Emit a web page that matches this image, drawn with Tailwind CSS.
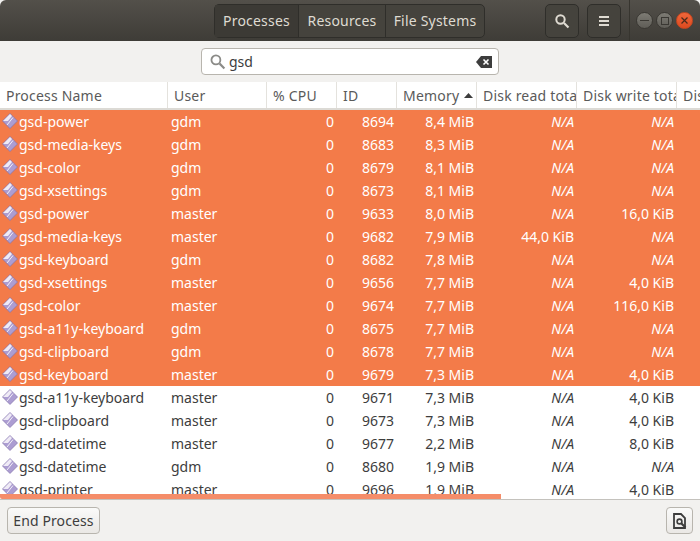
<!DOCTYPE html>
<html lang="en">
<head>
  <meta charset="UTF-8" />
  <title>System Monitor</title>
  <script src="https://cdn.jsdelivr.net/npm/@tailwindcss/browser@4"></script>
</head>
<body class="bg-[#f2f1ef] font-['Noto_Sans',sans-serif] text-[14px] text-[#3d3d3d] overflow-hidden">
  <div class="w-[700px] h-[541px] flex flex-col">
    <!-- title bar -->
    <header class="h-[41px] shrink-0 flex items-center bg-gradient-to-b from-[#53504a] to-[#3e3c37] rounded-t-[6px] text-[#dfdbd2]">
      <div class="ml-[214px] h-[34px] flex border border-[#2f2e2a] rounded-[5px] bg-[#45433d] tracking-[0.2px]">
        <div class="w-[84px] flex items-center justify-center border-r border-[#2f2e2a] bg-[#3c3a35]">Processes</div>
        <div class="w-[87px] flex items-center justify-center border-r border-[#2f2e2a]">Resources</div>
        <div class="w-[98px] flex items-center justify-center">File Systems</div>
      </div>
      <div class="ml-[60px] w-[34px] h-[34px] flex items-center justify-center border border-[#2f2e2a] rounded-[5px] bg-[#45433d]">
        <svg width="16" height="16" viewBox="0 0 16 16" fill="none" stroke="#dfdbd2"><circle cx="6.5" cy="6.5" r="4.2" stroke-width="2"/><path d="M10 10l4.5 4.5" stroke-width="2.2"/></svg>
      </div>
      <div class="ml-[8px] w-[34px] h-[34px] flex items-center justify-center border border-[#2f2e2a] rounded-[5px] bg-[#45433d]">
        <svg width="12" height="12" viewBox="0 0 12 12" fill="#dfdbd2"><rect x="1" y="1" width="10" height="2"/><rect x="1" y="5" width="10" height="2"/><rect x="1" y="9" width="10" height="2"/></svg>
      </div>
      <div class="ml-[8px] w-px h-[41px] bg-[#37352f]"></div>
      <div class="ml-[6px] flex gap-[3px]">
        <div class="w-[17px] h-[17px] rounded-full border border-[#3a3833] bg-gradient-to-b from-[#7d7b74] to-[#5f5d57] flex items-center justify-center">
          <div class="w-[9px] h-px bg-[#3a3833]"></div>
        </div>
        <div class="w-[17px] h-[17px] rounded-full border border-[#3a3833] bg-gradient-to-b from-[#7d7b74] to-[#5f5d57] flex items-center justify-center">
          <div class="w-[8px] h-[8px] border border-[#3a3833]"></div>
        </div>
        <div class="w-[17px] h-[17px] rounded-full border border-[#c9471f] bg-gradient-to-b from-[#f0663a] to-[#dc4a1f] flex items-center justify-center">
          <svg width="9" height="9" viewBox="0 0 9 9" stroke="#4a2a1a" stroke-width="1.2"><path d="M1.5 1.5l6 6M7.5 1.5l-6 6"/></svg>
        </div>
      </div>
    </header>

    <!-- search -->
    <div class="h-[41px] shrink-0 flex items-center justify-center">
      <div class="w-[298px] h-[27px] flex items-center bg-white border border-[#b8b5ae] rounded-[4px] pl-[7px] pr-[6px]">
        <svg width="17" height="17" viewBox="0 0 16 16" fill="none" stroke="#8b8b88"><circle cx="6.5" cy="6.5" r="4.2" stroke-width="1.7"/><path d="M10 10l4.5 4.5" stroke-width="2"/></svg>
        <span class="ml-[3px] flex-1">gsd</span>
        <svg width="16" height="12" viewBox="0 0 16 12"><path d="M5 0h11v12H5L0 6z" fill="#3d3d3d"/><path d="M7.5 3.5l5 5M12.5 3.5l-5 5" stroke="#fff" stroke-width="1.6"/></svg>
      </div>
    </div>

    <!-- table -->
    <div class="relative h-[418px] shrink-0 bg-white overflow-hidden border-b border-[#c4c2bd]">
      <div class="h-[28px] grid grid-cols-[168px_99px_70px_60px_80px_100px_100px_23px] border-b-2 border-[#dcdad5] text-[#5a5a5a] whitespace-nowrap tracking-[0.2px]">
        <div class="px-[6px] flex items-center border-r border-[#e4e2dd] overflow-hidden">Process Name</div>
        <div class="px-[6px] flex items-center border-r border-[#e4e2dd] overflow-hidden">User</div>
        <div class="px-[6px] flex items-center border-r border-[#e4e2dd] overflow-hidden">% CPU</div>
        <div class="px-[6px] flex items-center border-r border-[#e4e2dd] overflow-hidden">ID</div>
        <div class="pl-[6px] pr-[3px] flex items-center justify-between border-r border-[#e4e2dd] overflow-hidden">Memory
          <svg width="9" height="5" viewBox="0 0 9 5" fill="#3d3d3d"><path d="M4.5 0L9 5H0z"/></svg>
        </div>
        <div class="pl-[6px] flex items-center border-r border-[#e4e2dd] overflow-hidden">Disk read total</div>
        <div class="pl-[6px] flex items-center border-r border-[#e4e2dd] overflow-hidden">Disk write total</div>
        <div class="pl-[6px] flex items-center overflow-hidden">Disk</div>
      </div>
      <div id="rows"></div>
      <div class="absolute left-0 bottom-0 w-[501px] h-[5px] bg-[#f58d69] rounded-bl-[2px]"></div>
    </div>

    <!-- footer -->
    <footer class="flex-1 flex items-center justify-between px-[7px]">
      <button class="h-[27px] w-[93px] border border-[#b8b5ae] rounded-[4px] bg-gradient-to-b from-[#fafaf9] to-[#eae8e5] text-[#3d3d3d] tracking-[0.1px]">End Process</button>
      <button class="w-[27px] h-[27px] flex items-center justify-center border border-[#b8b5ae] rounded-[4px] bg-gradient-to-b from-[#fafaf9] to-[#eae8e5]">
        <svg width="14" height="16" viewBox="0 0 14 16"><path d="M1 1h7l4 4v10H1z" fill="none" stroke="#3d3d3d" stroke-width="1.8"/><circle cx="6.5" cy="8.5" r="2.4" fill="none" stroke="#3d3d3d" stroke-width="1.6"/><path d="M8.2 10.2l4.3 4.3" stroke="#3d3d3d" stroke-width="2.2"/></svg>
      </button>
    </footer>
  </div>

  <script>
    const data = [
      ["gsd-power", "gdm", "8694", "8,4 MiB", "N/A", "N/A"],
      ["gsd-media-keys", "gdm", "8683", "8,3 MiB", "N/A", "N/A"],
      ["gsd-color", "gdm", "8679", "8,1 MiB", "N/A", "N/A"],
      ["gsd-xsettings", "gdm", "8673", "8,1 MiB", "N/A", "N/A"],
      ["gsd-power", "master", "9633", "8,0 MiB", "N/A", "16,0 KiB"],
      ["gsd-media-keys", "master", "9682", "7,9 MiB", "44,0 KiB", "N/A"],
      ["gsd-keyboard", "gdm", "8682", "7,8 MiB", "N/A", "N/A"],
      ["gsd-xsettings", "master", "9656", "7,7 MiB", "N/A", "4,0 KiB"],
      ["gsd-color", "master", "9674", "7,7 MiB", "N/A", "116,0 KiB"],
      ["gsd-a11y-keyboard", "gdm", "8675", "7,7 MiB", "N/A", "N/A"],
      ["gsd-clipboard", "gdm", "8678", "7,7 MiB", "N/A", "N/A"],
      ["gsd-keyboard", "master", "9679", "7,3 MiB", "N/A", "4,0 KiB"],
      ["gsd-a11y-keyboard", "master", "9671", "7,3 MiB", "N/A", "4,0 KiB"],
      ["gsd-clipboard", "master", "9673", "7,3 MiB", "N/A", "4,0 KiB"],
      ["gsd-datetime", "master", "9677", "2,2 MiB", "N/A", "8,0 KiB"],
      ["gsd-datetime", "gdm", "8680", "1,9 MiB", "N/A", "N/A"],
      ["gsd-printer", "master", "9696", "1,9 MiB", "N/A", "4,0 KiB"]
    ];
    const icon = '<svg width="18" height="18" viewBox="0 0 18 18" class="absolute left-[1px] top-[2px]"><path d="M9 1.5L16.5 9 9 16.5 1.5 9z" fill="#ac9dd2" stroke="#8372ab" stroke-width="0.7"/><path d="M9 2L2 9H7l4-5z" fill="#efebf6"/><path d="M6 13l6-7.5" stroke="#f4f1f8" stroke-width="1"/></svg>';
    const cell = (v) => v === "N/A" ? '<i>N/A</i>' : v;
    document.getElementById("rows").innerHTML = data.map((r, i) => `
      <div class="relative h-[23px] grid grid-cols-[168px_99px_70px_60px_80px_100px_100px_23px] items-center whitespace-nowrap ${i < 12 ? "bg-[#f37b49] text-white" : "text-[#3d3d3d]"}">
        ${icon}
        <div class="pl-[19px]">${r[0]}</div>
        <div class="pl-[3px]">${r[1]}</div>
        <div class="pr-[3px] text-right">0</div>
        <div class="pr-[3px] text-right">${r[2]}</div>
        <div class="pr-[3px] text-right">${r[3]}</div>
        <div class="pr-[3px] text-right">${cell(r[4])}</div>
        <div class="pr-[3px] text-right">${cell(r[5])}</div>
      </div>`).join("");
  </script>
</body>
</html>
